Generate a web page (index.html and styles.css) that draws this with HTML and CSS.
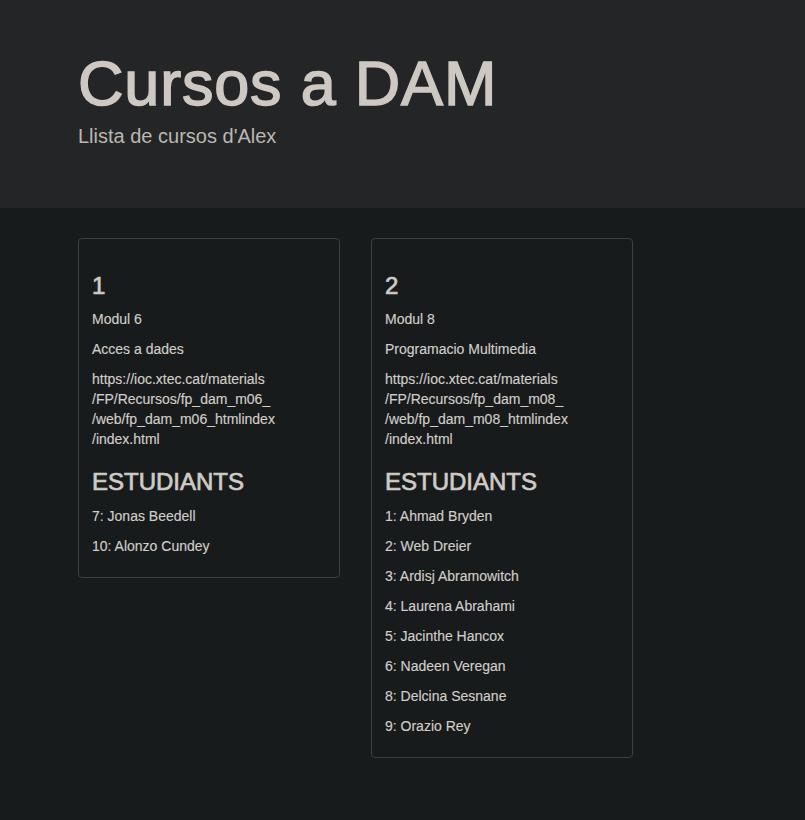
FILE: index.html
```html
<!DOCTYPE html>
<html lang="ca">
<head>
<meta charset="utf-8">
<title>Cursos a DAM</title>
<link rel="stylesheet" href="styles.css">
</head>
<body>
<header class="jumbotron">
  <h1 class="title">Cursos a DAM</h1>
  <p class="lead">Llista de cursos d'Alex</p>
</header>
<main class="courses">
  <section class="card">
    <h3 class="heading">1</h3>
    <p>Modul 6</p>
    <p>Acces a dades</p>
    <p>https://ioc.xtec.cat/materials<br>/FP/Recursos/fp_dam_m06_<br>/web/fp_dam_m06_htmlindex<br>/index.html</p>
    <h3 class="heading">ESTUDIANTS</h3>
    <p>7: Jonas Beedell</p>
    <p>10: Alonzo Cundey</p>
  </section>
  <section class="card">
    <h3 class="heading">2</h3>
    <p>Modul 8</p>
    <p>Programacio Multimedia</p>
    <p>https://ioc.xtec.cat/materials<br>/FP/Recursos/fp_dam_m08_<br>/web/fp_dam_m08_htmlindex<br>/index.html</p>
    <h3 class="heading">ESTUDIANTS</h3>
    <p>1: Ahmad Bryden</p>
    <p>2: Web Dreier</p>
    <p>3: Ardisj Abramowitch</p>
    <p>4: Laurena Abrahami</p>
    <p>5: Jacinthe Hancox</p>
    <p>6: Nadeen Veregan</p>
    <p>8: Delcina Sesnane</p>
    <p>9: Orazio Rey</p>
  </section>
</main>
</body>
</html>
```

FILE: styles.css
```css
* { box-sizing: border-box; }

html, body {
  margin: 0;
  padding: 0;
  background: #181b1c;
}

body {
  font-family: "Liberation Sans", Arial, Helvetica, sans-serif;
  font-size: 14px;
  line-height: 20px;
  color: #cdc8c2;
  min-height: 820px;
}

.jumbotron {
  background: #242526;
  height: 208px;
  padding: 52px 78px 0;
}

.title {
  margin: 0;
  font-size: 63px;
  line-height: 63px;
  font-weight: 400;
  letter-spacing: 0.8px;
  color: #cdc8c2;
  -webkit-text-stroke: 1.5px #cdc8c2;
}

.lead {
  margin: 6px 0 0;
  font-size: 20px;
  line-height: 30px;
  color: #bcb7b1;
}

.courses {
  display: flex;
  align-items: flex-start;
  gap: 31px;
  padding: 30px 78px 40px;
}

.card {
  width: 262px;
  border: 1px solid #3c4042;
  border-radius: 4px;
  padding: 14px 13px 11px;
}

.heading {
  margin: 20px 0 10px;
  font-size: 24px;
  line-height: 1.1;
  font-weight: 400;
  color: #d0cbc5;
  -webkit-text-stroke: 0.7px #d0cbc5;
}

.card p {
  margin: 0 0 10px;
  color: #d2cdc7;
  -webkit-text-stroke: 0.15px #d2cdc7;
}
```
